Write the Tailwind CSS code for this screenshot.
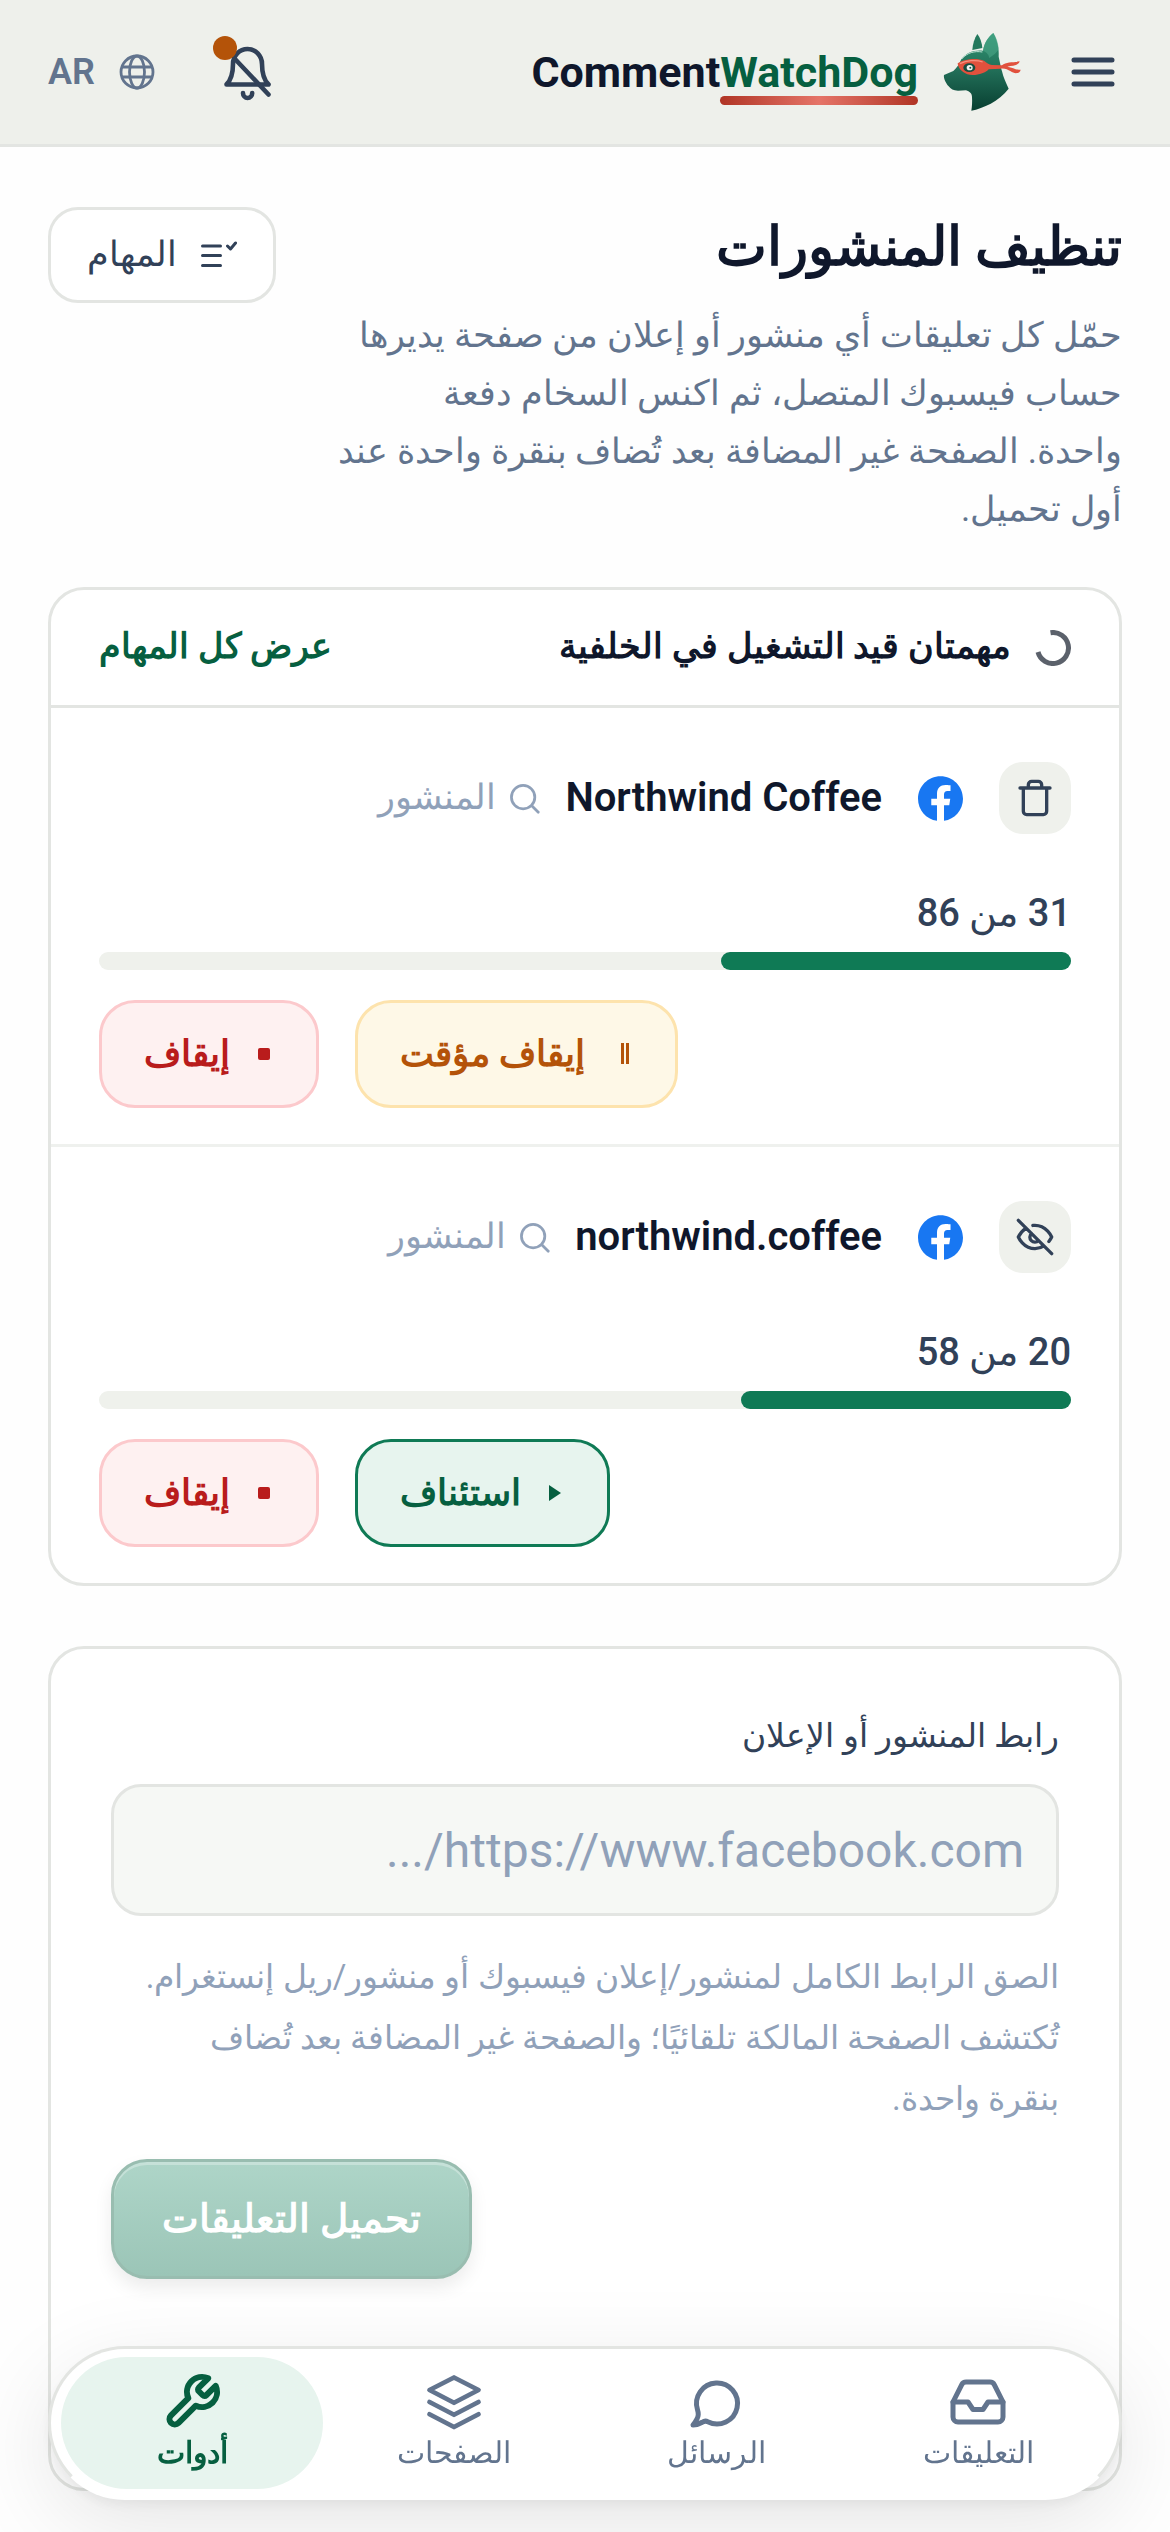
<!DOCTYPE html>
<html lang="ar" dir="rtl">

<head>
    <meta charset="UTF-8">
    <meta name="viewport" content="width=device-width, initial-scale=1.0">
    <title>CommentWatchDog</title>
    <script src="https://cdn.jsdelivr.net/npm/@tailwindcss/browser@4"></script>
</head>

<body class="bg-[#fefefe] text-slate-900 font-['Roboto','Noto_Sans'] min-h-screen">

    <!-- top bar -->
    <header class="h-[147px] px-12 flex items-center justify-between bg-[#eef0eb] border-b-3 border-[#e3e5e2]">
        <div class="flex items-center gap-10">
            <button class="w-[58px] h-[60px] flex items-center justify-center text-slate-700" aria-label="القائمة">
                <svg class="w-11 h-8" viewBox="0 0 44 32" fill="none" stroke="currentColor" stroke-width="5" stroke-linecap="round">
                    <path d="M3 4h38M3 16h38M3 28h38" />
                </svg>
            </button>
            <a href="#" class="flex items-center gap-6" dir="ltr">
                <span class="text-[43px] leading-[52px] font-bold flex">Comment<span class="text-[#065f40] relative">WatchDog<span
                            class="absolute inset-x-0 top-full -mt-0.5 h-[9px] rounded-full bg-linear-to-r from-[#b03424] via-[#e57468] to-[#b03424]"></span></span></span>
                <svg class="w-[82px] h-20" viewBox="70 36 246 240">
                    <defs>
                        <linearGradient id="fur" x1="0" y1="0" x2="0" y2="1">
                            <stop offset="0" stop-color="#2f9673" />
                            <stop offset=".45" stop-color="#23715a" />
                            <stop offset="1" stop-color="#083f31" />
                        </linearGradient>
                    </defs>
                    <path d="M176 42C168 54 162 72 161 90L191 84C190 68 184 52 176 42Z" fill="#24795d" />
                    <path d="M224 39C209 51 197 68 193 92C168 88 141 98 128 118C120 134 115 144 104 153L76 165C74 172 80 188 90 199C96 207 104 212 118 212L142 211C153 214 160 221 160 231C161 246 160 260 158 272C194 265 240 244 270 206C262 188 254 172 250 154C246 142 244 126 240 110C242 88 236 60 224 39Z" fill="url(#fur)" />
                    <path d="M224 39C209 51 197 68 193 92C206 98 210 104 212 114C226 104 238 96 240 84C238 66 233 52 224 39Z" fill="#4fa98a" opacity=".55" />
                    <path d="M130 116C146 98 168 92 191 96" fill="none" stroke="#bfe3d5" stroke-width="3" />
                    <path d="M117 130C134 118 172 112 196 122C204 128 210 134 220 135L250 136C262 124 284 128 303 124C300 138 282 136 266 140C284 142 292 152 306 149C304 162 286 162 276 154C266 148 258 144 246 146L210 148C200 160 168 170 146 163C130 156 118 144 117 130Z" fill="#e1513d" />
                    <path d="M124 131C142 122 172 118 192 126" fill="none" stroke="#f5907f" stroke-width="4" />
                    <ellipse cx="152" cy="143" rx="18" ry="13" fill="#174d40" />
                    <ellipse cx="153" cy="143" rx="9" ry="8" fill="#eef5f1" />
                    <circle cx="155" cy="143" r="3" fill="#174d40" />
                </svg>
            </a>
        </div>
        <div class="flex items-center">
            <button class="relative w-[60px] h-[60px] text-slate-700" aria-label="الإشعارات">
                <svg class="w-[60px] h-[60px]" viewBox="0 0 60 60" fill="none" stroke="currentColor" stroke-width="4.6" stroke-linecap="round" stroke-linejoin="round">
                    <path d="M9.500 42.500C14 38 16 31 16 22a14.500 15 0 0 1 29 0C45 31 47 38 51.500 42.500Z" />
                    <path d="M17.500 16.500 51.500 52.500M26 51a4.600 5 0 0 0 9.200 0" />
                </svg>
                <span class="absolute -top-1.5 -left-1 size-6 rounded-full bg-[#b45309]"></span>
            </button>
            <button class="flex items-center gap-6 ms-[62px] text-slate-500 text-[36px] leading-[48px] font-semibold">
                <svg class="size-9" viewBox="0 0 36 36" fill="none" stroke="currentColor" stroke-width="2.8">
                    <circle cx="18" cy="18" r="16" />
                    <ellipse cx="18" cy="18" rx="7.500" ry="16" />
                    <path d="M3 13h30M3 23h30" />
                </svg>
                AR
            </button>
        </div>
    </header>

    <main class="px-12 pt-[60px]">
        <div class="flex items-start justify-between gap-8">
            <div class="flex-1">
                <h1 class="text-[54px] leading-[80px] font-bold">تنظيف المنشورات</h1>
                <p class="mt-5 text-[35px] leading-[58px] text-slate-500">حمّل كل تعليقات أي منشور أو إعلان من صفحة يديرها<br>حساب فيسبوك المتصل، ثم اكنس السخام دفعة<br>واحدة. الصفحة غير المضافة بعد تُضاف بنقرة واحدة عند<br>أول تحميل.</p>
            </div>
            <button class="h-24 px-9 flex items-center gap-6 rounded-[30px] border-3 border-[#e3e5e2] bg-white text-slate-700 text-[35px] font-medium">
                <svg class="size-9" viewBox="0 0 36 36" fill="none" stroke="currentColor" stroke-width="3" stroke-linecap="round" stroke-linejoin="round">
                    <path d="M1.500 9h18M1.500 18.500h18M1.500 28.500h18M26.500 9l3 3 5-6" />
                </svg>
                المهام
            </button>
        </div>

        <!-- background jobs -->
        <section class="mt-12 bg-white rounded-[36px] border-3 border-[#e3e5e2]">
            <div class="h-[118px] px-12 flex items-center justify-between border-b-3 border-[#e3e5e2] text-[35px] font-semibold">
                <h2 class="flex items-center gap-6">
                    <svg class="size-9" viewBox="0 0 36 36" fill="none" stroke="#5b616b" stroke-width="5">
                        <path d="M15.500 2.700A15.500 15.500 0 1 1 3 22" />
                    </svg>
                    مهمتان قيد التشغيل في الخلفية
                </h2>
                <a href="#" class="text-[#065f40]">عرض كل المهام</a>
            </div>

            <article class="px-12 pt-[54px] pb-9 border-b-3 border-[#eff1ee]">
                <div class="h-[72px] flex items-center">
                    <span class="size-[72px] flex items-center justify-center rounded-3xl bg-[#eff1ec] text-slate-700">
                        <svg class="size-10" viewBox="0 0 24 24" fill="none" stroke="currentColor" stroke-width="2" stroke-linecap="round" stroke-linejoin="round">
                            <path d="M3 6h18M19 6v14a2 2 0 0 1-2 2H7a2 2 0 0 1-2-2V6M8 6V4a2 2 0 0 1 2-2h4a2 2 0 0 1 2 2v2" />
                        </svg>
                    </span>
                    <svg class="size-[45px] mx-9" viewBox="0 0 24 24" fill="#1877f2">
                        <path d="M24 12.073c0-6.627-5.373-12-12-12s-12 5.373-12 12c0 5.990 4.388 10.954 10.125 11.854v-8.385H7.078v-3.470h3.047V9.430c0-3.007 1.792-4.669 4.533-4.669 1.312 0 2.686.235 2.686.235v2.953H15.830c-1.491 0-1.956.925-1.956 1.874v2.250h3.328l-.532 3.470h-2.796v8.385C19.612 23.027 24 18.062 24 12.073z" />
                    </svg>
                    <span class="text-[40px] leading-[48px] font-semibold" dir="ltr">Northwind Coffee</span>
                    <a href="#" class="ms-6 flex items-center gap-3 text-[35px] leading-[48px] text-slate-400">
                        <svg class="size-[33px]" viewBox="0 0 24 24" fill="none" stroke="currentColor" stroke-width="2" stroke-linecap="round">
                            <circle cx="11" cy="11" r="8.500" />
                            <path d="m17.500 17.500 4.500 4.500" />
                        </svg>
                        المنشور
                    </a>
                </div>
                <p class="mt-[52px] text-[38px] leading-[54px] font-medium text-slate-700">31 من 86</p>
                <div class="mt-3 h-[18px] rounded-full bg-[#eff1ec]">
                    <div class="h-full rounded-full bg-[#0f7a55]" style="width: 36%"></div>
                </div>
                <div class="mt-[30px] flex justify-end gap-9 text-[36px] font-semibold">
                    <button class="h-[108px] px-[42px] flex items-center gap-8 rounded-[36px] border-3 border-[#fde3ad] bg-[#fef8e7] text-[#b45309]">
                        <svg class="w-4 h-6" viewBox="0 0 16 24" fill="currentColor">
                            <path d="M4 1h3v21H4zM9 1h3v21H9z" />
                        </svg>
                        إيقاف مؤقت
                    </button>
                    <button class="h-[108px] px-[42px] flex items-center gap-6 rounded-[36px] border-3 border-[#fcc9cc] bg-[#fef1f1] text-[#b91c1c]">
                        <span class="m-1 size-3 rounded-[2px] bg-[#b91c1c]"></span>
                        إيقاف
                    </button>
                </div>
            </article>

            <article class="px-12 pt-[54px] pb-9">
                <div class="h-[72px] flex items-center">
                    <span class="size-[72px] flex items-center justify-center rounded-3xl bg-[#eff1ec] text-slate-700">
                        <svg class="size-10" viewBox="0 0 24 24" fill="none" stroke="currentColor" stroke-width="2" stroke-linecap="round" stroke-linejoin="round">
                            <path d="M9.880 9.880a3 3 0 1 0 4.240 4.240M10.730 5.080A10.430 10.430 0 0 1 12 5c7 0 10 7 10 7a13.160 13.160 0 0 1-1.670 2.680M6.610 6.610A13.526 13.526 0 0 0 2 12s3 7 10 7a9.740 9.740 0 0 0 5.390-1.610M2 2l20 20" />
                        </svg>
                    </span>
                    <svg class="size-[45px] mx-9" viewBox="0 0 24 24" fill="#1877f2">
                        <path d="M24 12.073c0-6.627-5.373-12-12-12s-12 5.373-12 12c0 5.990 4.388 10.954 10.125 11.854v-8.385H7.078v-3.470h3.047V9.430c0-3.007 1.792-4.669 4.533-4.669 1.312 0 2.686.235 2.686.235v2.953H15.830c-1.491 0-1.956.925-1.956 1.874v2.250h3.328l-.532 3.470h-2.796v8.385C19.612 23.027 24 18.062 24 12.073z" />
                    </svg>
                    <span class="text-[40px] leading-[48px] font-semibold" dir="ltr">northwind.coffee</span>
                    <a href="#" class="ms-6 flex items-center gap-3 text-[35px] leading-[48px] text-slate-400">
                        <svg class="size-[33px]" viewBox="0 0 24 24" fill="none" stroke="currentColor" stroke-width="2" stroke-linecap="round">
                            <circle cx="11" cy="11" r="8.500" />
                            <path d="m17.500 17.500 4.500 4.500" />
                        </svg>
                        المنشور
                    </a>
                </div>
                <p class="mt-[52px] text-[38px] leading-[54px] font-medium text-slate-700">20 من 58</p>
                <div class="mt-3 h-[18px] rounded-full bg-[#eff1ec]">
                    <div class="h-full rounded-full bg-[#0f7a55]" style="width: 34%"></div>
                </div>
                <div class="mt-[30px] flex justify-end gap-9 text-[36px] font-semibold">
                    <button class="h-[108px] px-[42px] flex items-center gap-6 rounded-[36px] border-3 border-[#0f7a55] bg-[#e7f4ee] text-[#065f40]">
                        <svg class="size-5" viewBox="0 0 20 20" fill="currentColor">
                            <path d="M4 2 16 10 4 18z" />
                        </svg>
                        استئناف
                    </button>
                    <button class="h-[108px] px-[42px] flex items-center gap-6 rounded-[36px] border-3 border-[#fcc9cc] bg-[#fef1f1] text-[#b91c1c]">
                        <span class="m-1 size-3 rounded-[2px] bg-[#b91c1c]"></span>
                        إيقاف
                    </button>
                </div>
            </article>
        </section>

        <!-- load form, bottom padding leaves room for the nav -->
        <form class="mt-[60px] px-[60px] pt-[60px] pb-[209px] bg-white rounded-[36px] border-3 border-[#e3e5e2]">
            <label for="postUrl" class="block text-[33px] leading-[54px] font-medium text-slate-700">رابط المنشور أو الإعلان</label>
            <input id="postUrl" type="text" placeholder="https://www.facebook.com/..."
                class="mt-[21px] block w-full h-[132px] px-8 rounded-[30px] border-3 border-[#e3e5e2] bg-[#f6f8f5] text-[48px] placeholder:text-slate-400">
            <p class="mt-[30px] text-[33px] leading-[61px] text-slate-400">الصق الرابط الكامل لمنشور/إعلان فيسبوك أو منشور/ريل إنستغرام.<br>تُكتشف الصفحة المالكة تلقائيًا؛ والصفحة غير المضافة بعد تُضاف<br>بنقرة واحدة.</p>
            <div class="mt-[30px] flex justify-end">
                <button type="submit"
                    class="h-[120px] px-12 rounded-[36px] border-3 border-[#99bdb0] bg-linear-to-b from-[#aed5c8] to-[#9bc5b7] text-white text-[39px] font-semibold shadow-[0_9px_18px_rgba(0,0,0,0.08),inset_0_3px_0_rgba(255,255,255,0.3)]">تحميل التعليقات</button>
            </div>
        </form>
    </main>

    <!-- bottom nav -->
    <nav class="fixed inset-x-12 bottom-8 h-[154px] px-2.5 flex items-center rounded-full bg-white border-3 border-[#e3e5e2] border-b-white text-[30px] leading-[42px] font-medium text-slate-500 shadow-[0_6px_12px_rgba(0,0,0,0.05),0_24px_90px_rgba(0,0,0,0.10)]">
        <a href="#" class="flex-1 h-[132px] flex flex-col items-center justify-center">
            <svg class="size-[60px]" viewBox="0 0 24 24" fill="none" stroke="currentColor" stroke-width="2" stroke-linecap="round" stroke-linejoin="round">
                <path d="M22 12h-6l-2 3h-4l-2-3H2" />
                <path d="M5.450 5.110 2 12v6a2 2 0 0 0 2 2h16a2 2 0 0 0 2-2v-6l-3.450-6.890A2 2 0 0 0 16.760 4H7.240a2 2 0 0 0-1.790 1.110z" />
            </svg>
            التعليقات
        </a>
        <a href="#" class="flex-1 h-[132px] flex flex-col items-center justify-center">
            <svg class="size-[60px]" viewBox="0 0 24 24" fill="none" stroke="currentColor" stroke-width="2" stroke-linecap="round" stroke-linejoin="round">
                <path d="M4.600 15.100A8.200 8.200 0 1 1 8.700 19.900C7.800 19.400 7.200 19.600 6.500 20.100 5.500 20.700 4 21.100 2.800 21.200 3.900 19.800 4.900 18.500 4.900 17 4.900 16.300 4.800 15.700 4.600 15.100Z" />
            </svg>
            الرسائل
        </a>
        <a href="#" class="flex-1 h-[132px] flex flex-col items-center justify-center">
            <svg class="size-[60px]" viewBox="0 0 24 24" fill="none" stroke="currentColor" stroke-width="1.900" stroke-linecap="round" stroke-linejoin="round">
                <path d="M12 2.200 21.800 7.200 12 12.300 2.200 7.200ZM2.200 12 12 17.100l9.800-5.100M2.200 16.900 12 22l9.800-5.100" />
            </svg>
            الصفحات
        </a>
        <a href="#" class="flex-1 h-[132px] flex flex-col items-center justify-center rounded-full bg-[#e7f4ee] text-[#065f40] font-semibold">
            <svg class="size-[60px]" viewBox="0 0 24 24" fill="none" stroke="currentColor" stroke-width="2.400" stroke-linecap="round" stroke-linejoin="round">
                <path d="M14.700 6.300a1 1 0 0 0 0 1.400l1.600 1.600a1 1 0 0 0 1.400 0l3.770-3.770a6 6 0 0 1-7.940 7.940l-6.910 6.910a2.120 2.120 0 0 1-3-3l6.910-6.910a6 6 0 0 1 7.940-7.940l-3.760 3.760z" />
            </svg>
            أدوات
        </a>
    </nav>
</body>

</html>
